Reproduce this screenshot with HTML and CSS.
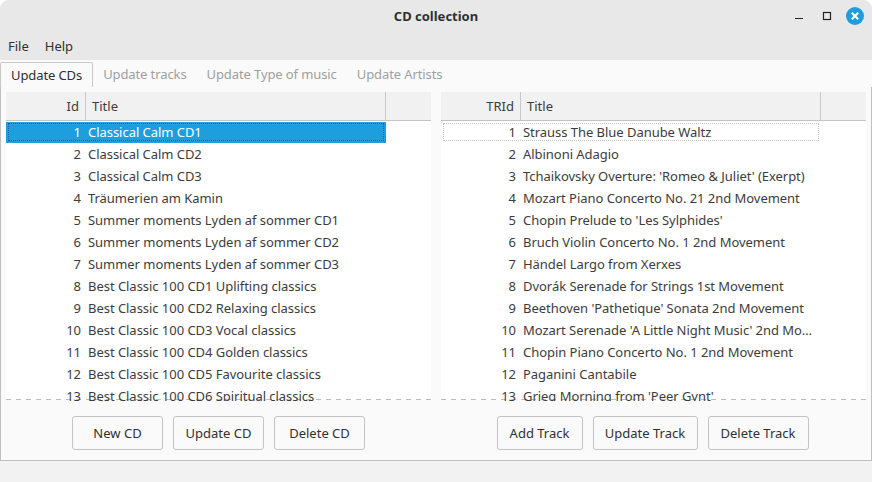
FILE: index.html
```html
<!DOCTYPE html>
<html lang="en">
  <head>
    <meta charset="UTF-8" />
    <title>CD collection</title>
    <link rel="stylesheet" href="styles.css">
  </head>
  <body>
    <div class="window">
      <header class="titlebar">
        <h1 class="title">CD collection</h1>
        <div class="controls">
          <svg width="14" height="14" viewBox="0 0 14 14"><path d="M1 9.5h8" stroke="#222" stroke-width="1.2" fill="none"/></svg>
          <svg width="14" height="14" viewBox="0 0 14 14"><rect x="3.5" y="3.5" width="7" height="7" stroke="#222" stroke-width="1.2" fill="none"/></svg>
          <svg width="18" height="18" viewBox="0 0 18 18"><circle cx="9" cy="9" r="9" fill="#1f9ede"/><path d="M5.8 5.8l6.4 6.4M12.2 5.8l-6.4 6.4" stroke="#fff" stroke-width="2" fill="none"/></svg>
        </div>
      </header>
      <nav class="menubar">
        <span>File</span>
        <span>Help</span>
      </nav>
      <div class="tabs">
        <span class="tab active">Update CDs</span>
        <span class="tab">Update tracks</span>
        <span class="tab">Update Type of music</span>
        <span class="tab">Update Artists</span>
      </div>
      <main class="panel">
        <section class="side">
          <div class="table">
            <div class="thead">
              <span class="th th-id">Id</span>
              <span class="th th-title">Title</span>
            </div>
            <div class="rows">
              <div class="row selected"><span class="row-id">1</span><span class="row-title">Classical Calm CD1</span></div>
              <div class="row"><span class="row-id">2</span><span class="row-title">Classical Calm CD2</span></div>
              <div class="row"><span class="row-id">3</span><span class="row-title">Classical Calm CD3</span></div>
              <div class="row"><span class="row-id">4</span><span class="row-title">Träumerien am Kamin</span></div>
              <div class="row"><span class="row-id">5</span><span class="row-title">Summer moments Lyden af sommer CD1</span></div>
              <div class="row"><span class="row-id">6</span><span class="row-title">Summer moments Lyden af sommer CD2</span></div>
              <div class="row"><span class="row-id">7</span><span class="row-title">Summer moments Lyden af sommer CD3</span></div>
              <div class="row"><span class="row-id">8</span><span class="row-title">Best Classic 100 CD1 Uplifting classics</span></div>
              <div class="row"><span class="row-id">9</span><span class="row-title">Best Classic 100 CD2 Relaxing classics</span></div>
              <div class="row"><span class="row-id">10</span><span class="row-title">Best Classic 100 CD3 Vocal classics</span></div>
              <div class="row"><span class="row-id">11</span><span class="row-title">Best Classic 100 CD4 Golden classics</span></div>
              <div class="row"><span class="row-id">12</span><span class="row-title">Best Classic 100 CD5 Favourite classics</span></div>
              <div class="row"><span class="row-id">13</span><span class="row-title">Best Classic 100 CD6 Spiritual classics</span></div>
            </div>
          </div>
          <div class="buttons">
            <button class="btn btn-cd">New CD</button>
            <button class="btn btn-cd">Update CD</button>
            <button class="btn btn-cd">Delete CD</button>
          </div>
        </section>
        <section class="side">
          <div class="table">
            <div class="thead">
              <span class="th th-id">TRId</span>
              <span class="th th-title">Title</span>
            </div>
            <div class="rows">
              <div class="row focused"><span class="row-id">1</span><span class="row-title">Strauss The Blue Danube Waltz</span></div>
              <div class="row"><span class="row-id">2</span><span class="row-title">Albinoni Adagio</span></div>
              <div class="row"><span class="row-id">3</span><span class="row-title">Tchaikovsky Overture: 'Romeo &amp; Juliet' (Exerpt)</span></div>
              <div class="row"><span class="row-id">4</span><span class="row-title">Mozart Piano Concerto No. 21 2nd Movement</span></div>
              <div class="row"><span class="row-id">5</span><span class="row-title">Chopin Prelude to 'Les Sylphides'</span></div>
              <div class="row"><span class="row-id">6</span><span class="row-title">Bruch Violin Concerto No. 1 2nd Movement</span></div>
              <div class="row"><span class="row-id">7</span><span class="row-title">Händel Largo from Xerxes</span></div>
              <div class="row"><span class="row-id">8</span><span class="row-title">Dvorák Serenade for Strings 1st Movement</span></div>
              <div class="row"><span class="row-id">9</span><span class="row-title">Beethoven 'Pathetique' Sonata 2nd Movement</span></div>
              <div class="row"><span class="row-id">10</span><span class="row-title">Mozart Serenade 'A Little Night Music' 2nd Movement</span></div>
              <div class="row"><span class="row-id">11</span><span class="row-title">Chopin Piano Concerto No. 1 2nd Movement</span></div>
              <div class="row"><span class="row-id">12</span><span class="row-title">Paganini Cantabile</span></div>
              <div class="row"><span class="row-id">13</span><span class="row-title">Grieg Morning from 'Peer Gynt'</span></div>
            </div>
          </div>
          <div class="buttons buttons-tracks">
            <button class="btn btn-add">Add Track</button>
            <button class="btn btn-upd">Update Track</button>
            <button class="btn btn-del">Delete Track</button>
          </div>
        </section>
      </main>
    </div>
  </body>
</html>
```

FILE: styles.css
```css
* {
  box-sizing: border-box;
}
html, body {
  margin: 0;
  background: #fff;
}
body {
  font-family: "Noto Sans", sans-serif;
  font-size: 13px;
  color: #3c3c3c;
}
.window {
  width: 872px;
  height: 482px;
  display: flex;
  flex-direction: column;
  background: #f2f2f2;
  border-radius: 9px 9px 0 0;
  overflow: hidden;
}
.titlebar {
  height: 32px;
  flex: none;
  display: flex;
  align-items: center;
  justify-content: center;
  background: #e8e8e8;
  position: relative;
}
.title {
  margin: 0;
  font-size: 13px;
  font-weight: 700;
  color: #303030;
}
.controls {
  position: absolute;
  right: 8px;
  top: 7px;
  display: flex;
  align-items: center;
  gap: 12px;
}
.menubar {
  height: 28px;
  flex: none;
  display: flex;
  align-items: center;
  gap: 16px;
  padding: 0 8px;
  background: #e8e8e8;
  color: #303030;
}
.tabs {
  height: 27px;
  flex: none;
  display: flex;
  background: #fafafa;
  padding-top: 2px;
  letter-spacing: -0.1px;
}
.tab {
  padding: 0 10px;
  line-height: 24px;
  color: #a0a0a0;
}
.tab.active {
  color: #303030;
  border: 1px solid #c8c8c8;
  border-bottom: none;
  border-radius: 2px 2px 0 0;
}
.panel {
  height: 374px;
  flex: none;
  display: flex;
  justify-content: space-between;
  padding: 5px 5px 0;
  background: #fafafa;
  border: 1px solid #bfbfbf;
  border-top: none;
}
.side {
  width: 425px;
}
.table {
  position: relative;
  height: 308px;
  background: #fff;
}
.table::after {
  content: "";
  position: absolute;
  left: 0;
  right: 0;
  bottom: 0;
  height: 1px;
  background: repeating-linear-gradient(90deg, #bdbdbd 0 5px, transparent 5px 10px);
}
.thead {
  height: 29px;
  display: flex;
  background: #f1f1f1;
  border-bottom: 1px solid #c4c4c4;
}
.th {
  line-height: 29px;
  border-right: 1px solid #c8c8c8;
}
.th-id {
  width: 80px;
  text-align: right;
  padding-right: 6px;
}
.th-title {
  width: 300px;
  padding-left: 6px;
}
.rows {
  position: relative;
  z-index: 1;
  height: 280px;
  overflow: hidden;
  letter-spacing: -0.04px;
}
.row {
  height: 22px;
  width: 380px;
  display: flex;
  align-items: center;
  white-space: nowrap;
}
.row-id {
  width: 75px;
  flex: none;
  text-align: right;
}
.row-title {
  width: 300px;
  flex: none;
  padding-left: 7px;
  overflow: hidden;
  text-overflow: ellipsis;
}
.row.selected {
  background: #1f9ede;
  box-shadow: inset 0 1px 0 #fff;
  color: #fff;
  outline: 1px dotted #14689c;
  outline-offset: -3px;
}
.row.focused {
  outline: 1px dotted #c4c4c4;
  outline-offset: -3px;
}
.buttons {
  display: flex;
  justify-content: center;
  gap: 10px;
  margin-top: 16px;
}
.buttons-tracks {
  padding-right: 2px;
}
.btn {
  height: 34px;
  font: inherit;
  color: #303030;
  background: #fafafa;
  border: 1px solid #c4c4c4;
  border-radius: 3px;
  padding: 0;
}
.btn-cd {
  width: 91px;
}
.btn-add {
  width: 86px;
}
.btn-upd {
  width: 105px;
}
.btn-del {
  width: 101px;
}
```
